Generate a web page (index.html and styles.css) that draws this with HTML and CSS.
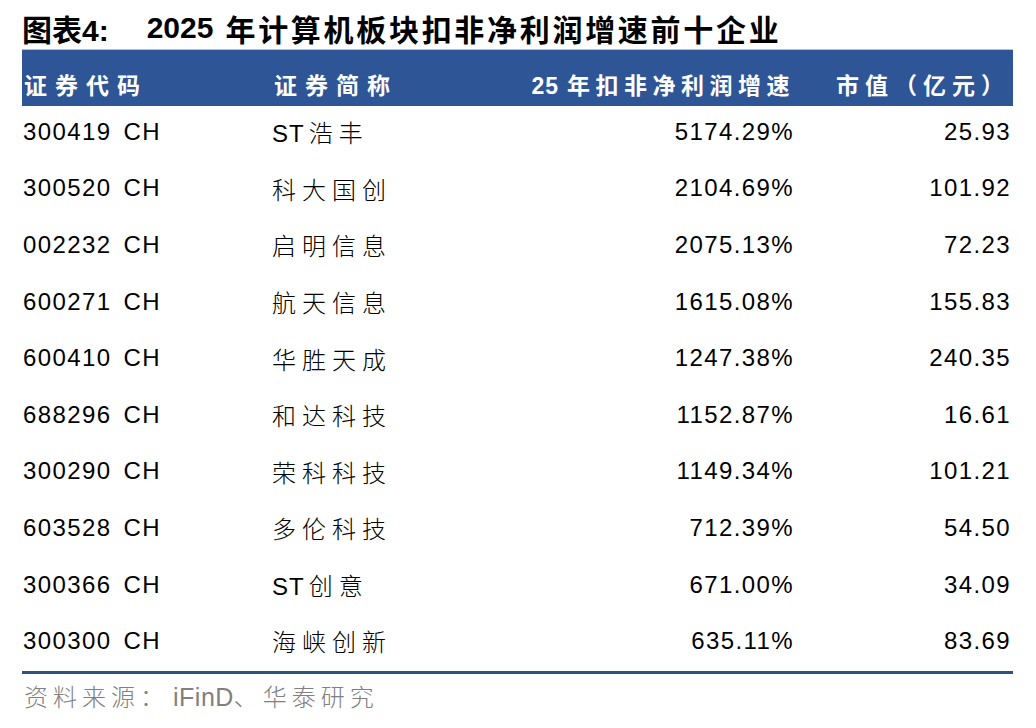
FILE: index.html
```html
<!DOCTYPE html>
<html lang="zh-CN">
<head>
<meta charset="utf-8">
<title>图表4</title>
<link rel="stylesheet" href="styles.css">
</head>
<body>
<div class="page">
  <h1 class="title"><span class="fig">图表4:</span><span class="yr">2025</span><span class="ttxt">年计算机板块扣非净利润增速前十企业</span></h1>
  <div class="table">
    <div class="row head">
      <div class="c1">证券代码</div>
      <div class="c2">证券简称</div>
      <div class="c3"><span class="num">25</span>年扣非净利润增速</div>
      <div class="c4">市值（亿元）</div>
    </div>
    <div class="row"><div class="c1">300419 CH</div><div class="c2"><span class="lat">ST</span>浩丰</div><div class="c3">5174.29%</div><div class="c4">25.93</div></div>
    <div class="row"><div class="c1">300520 CH</div><div class="c2">科大国创</div><div class="c3">2104.69%</div><div class="c4">101.92</div></div>
    <div class="row"><div class="c1">002232 CH</div><div class="c2">启明信息</div><div class="c3">2075.13%</div><div class="c4">72.23</div></div>
    <div class="row"><div class="c1">600271 CH</div><div class="c2">航天信息</div><div class="c3">1615.08%</div><div class="c4">155.83</div></div>
    <div class="row"><div class="c1">600410 CH</div><div class="c2">华胜天成</div><div class="c3">1247.38%</div><div class="c4">240.35</div></div>
    <div class="row"><div class="c1">688296 CH</div><div class="c2">和达科技</div><div class="c3">1152.87%</div><div class="c4">16.61</div></div>
    <div class="row"><div class="c1">300290 CH</div><div class="c2">荣科科技</div><div class="c3">1149.34%</div><div class="c4">101.21</div></div>
    <div class="row"><div class="c1">603528 CH</div><div class="c2">多伦科技</div><div class="c3">712.39%</div><div class="c4">54.50</div></div>
    <div class="row"><div class="c1">300366 CH</div><div class="c2"><span class="lat">ST</span>创意</div><div class="c3">671.00%</div><div class="c4">34.09</div></div>
    <div class="row last"><div class="c1">300300 CH</div><div class="c2">海峡创新</div><div class="c3">635.11%</div><div class="c4">83.69</div></div>
  </div>
  <p class="source">资料来源：<span class="lat">iFinD</span>、华泰研究</p>
</div>
</body>
</html>
```

FILE: styles.css
```css
html, body {
  margin: 0;
  padding: 0;
  background: #ffffff;
}

.page {
  width: 1036px;
  height: 728px;
  overflow: hidden;
  padding-left: 22px;
  box-sizing: border-box;
  font-family: "Liberation Sans", "Noto Sans CJK SC", sans-serif;
  color: #000;
}

.title {
  margin: 0;
  height: 49px;
  box-sizing: border-box;
  padding-top: 7px;
  display: flex;
  align-items: center;
  font-size: 30px;
  font-weight: bold;
  white-space: nowrap;
  color: #000;
}

.title .fig {
  margin-right: 38px;
}

.title .yr {
  margin-right: 12px;
}

.title .ttxt {
  letter-spacing: 2.7px;
}

.table {
  width: 991px;
}

.row {
  display: grid;
  grid-template-columns: 250px 250px 293px 198px;
  height: 56.6px;
  align-items: center;
  font-size: 24px;
  letter-spacing: 1.4px;
  box-sizing: border-box;
  padding-bottom: 5px;
  white-space: nowrap;
}

.row .c2 {
  letter-spacing: 6px;
  font-weight: 300;
}

.row .c2 .lat {
  letter-spacing: 1px;
  font-weight: normal;
  margin-right: 4px;
}

.row .c1 {
  padding-left: 1px;
  word-spacing: 4px;
}

.row .c3 {
  text-align: right;
  padding-right: 21px;
}

.row .c4 {
  text-align: right;
  padding-right: 2px;
}

.row.head {
  height: 57px;
  border-top: 1px solid #b5c1d8;
  background: #2e5596;
  color: #ffffff;
  font-weight: bold;
  font-size: 23px;
  letter-spacing: 8px;
  padding-top: 11px;
  padding-bottom: 0;
}

.row.head .c1 {
  padding-left: 2px;
  word-spacing: 0;
}

.row.head .c2 {
  padding-left: 2px;
  letter-spacing: 8px;
  font-weight: bold;
}

.row.head .c3 {
  letter-spacing: 5.5px;
  padding-right: 20px;
}

.row.head .c3 .num {
  letter-spacing: 1px;
  margin-right: 8px;
}

.row.head .c4 {
  padding-right: 3px;
  letter-spacing: 6px;
}

.row.last {
  border-bottom: 3px solid #2b5580;
  height: 59px;
}

.source {
  margin: 0;
  padding-top: 8px;
  padding-left: 2px;
  font-size: 24px;
  font-weight: 300;
  letter-spacing: 5px;
  color: #808080;
  line-height: 30px;
  white-space: nowrap;
}

.source .lat {
  letter-spacing: 0.5px;
  font-size: 25px;
  margin-left: 4px;
}
```
